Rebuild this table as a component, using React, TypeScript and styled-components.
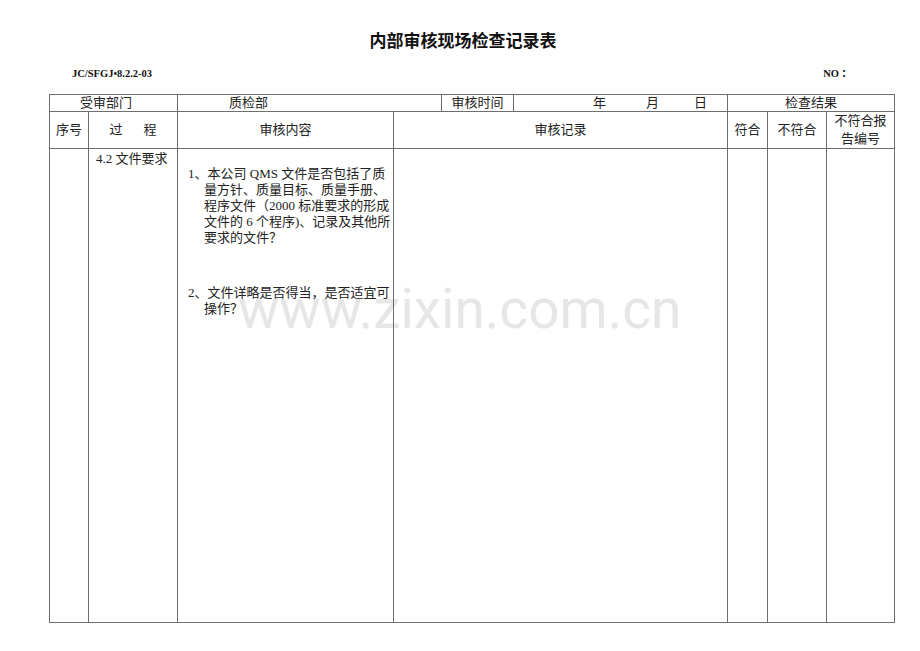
import React from "react";
import styled, { createGlobalStyle } from "styled-components";

const GlobalStyle = createGlobalStyle`
  html, body { margin: 0; padding: 0; background: #ffffff; }
  body { font-family: "Liberation Serif", "Noto Sans CJK SC", serif; color: #222; }
`;

const Page = styled.div`
  position: relative;
  width: 920px;
  height: 651px;
  overflow: hidden;
  background: #fff;
  display: flex;
  flex-direction: column;
`;

const Watermark = styled.div`
  position: absolute;
  left: 238px;
  top: 282px;
  font-family: Roboto, "Liberation Sans", sans-serif;
  font-weight: 400;
  font-size: 55px;
  line-height: 55px;
  color: #e6e6e6;
  white-space: nowrap;
  pointer-events: none;
  z-index: 0;
`;

const Title = styled.h1`
  margin: 30px 0 0 6px;
  text-align: center;
  font-family: "Noto Sans CJK SC", "Liberation Sans", sans-serif;
  font-size: 17px;
  line-height: 20px;
  font-weight: 700;
  color: #111;
  position: relative;
  z-index: 1;
`;

const CodeRow = styled.div`
  display: flex;
  justify-content: space-between;
  margin-top: 17px;
  padding: 0 68px 0 72px;
  font-family: "Liberation Serif", "Noto Sans CJK SC", serif;
  font-weight: 700;
  font-size: 10.5px;
  line-height: 14px;
  color: #111;
  position: relative;
  z-index: 1;
`;

const Sheet = styled.table`
  position: relative;
  z-index: 1;
  margin: 13px 0 0 49px;
  width: 845px;
  table-layout: fixed;
  border-collapse: collapse;
  font-family: "Liberation Serif", "Noto Sans CJK SC", serif;
  font-size: 13px;
  color: #222;
  background: transparent;
`;

const HeadRow = styled.tr<{ $h: number }>`
  height: ${(p) => p.$h}px;
`;

const Cell = styled.td<{ $align?: string; $pl?: number }>`
  border: 1px solid #6e6e6e;
  padding: 0 0 0 ${(p) => p.$pl ?? 0}px;
  text-align: ${(p) => p.$align ?? "center"};
  vertical-align: middle;
  line-height: 16px;
  white-space: nowrap;
`;

const TallCell = styled.td`
  border: 1px solid #6e6e6e;
  padding: 0;
  vertical-align: top;
  line-height: 16px;
`;

const Wrap2 = styled.div`
  line-height: 18px;
`;

const DateText = styled.span`
  display: inline-flex;
  gap: 0;
`;

const DatePart = styled.span<{ $w: number }>`
  display: inline-block;
  width: ${(p) => p.$w}px;
  text-align: left;
`;

const Spread = styled.span`
  display: inline-flex;
  gap: 21px;
`;

const ProcessText = styled.div`
  padding: 2px 0 0 7px;
  white-space: nowrap;
`;

const Items = styled.div`
  padding: 17px 0 0 10px;
  display: flex;
  flex-direction: column;
  gap: 39px;
`;

const Item = styled.div`
  display: flex;
  flex-direction: column;
`;

const Line = styled.div<{ $cont?: boolean }>`
  white-space: nowrap;
  padding-left: ${(p) => (p.$cont ? 16 : 0)}px;
  height: 16px;
`;

const cols = [39, 89, 216, 48, 72, 214, 40, 59, 68];

export default function App() {
  return (
    <Page>
      <GlobalStyle />
      <Watermark>www.zixin.com.cn</Watermark>
      <Title>内部审核现场检查记录表</Title>
      <CodeRow>
        <span>JC/SFGJ•8.2.2-03</span>
        <span>NO ：</span>
      </CodeRow>
      <Sheet>
        <colgroup>
          {cols.map((w, i) => (
            <col key={i} style={{ width: w }} />
          ))}
        </colgroup>
        <tbody>
          <HeadRow $h={17}>
            <Cell colSpan={2} $align="left" $pl={30}>受审部门</Cell>
            <Cell colSpan={2} $align="left" $pl={51}>质检部</Cell>
            <Cell>审核时间</Cell>
            <Cell $align="left" $pl={79}>
              <DateText>
                <DatePart $w={53}>年</DatePart>
                <DatePart $w={48}>月</DatePart>
                <DatePart $w={13}>日</DatePart>
              </DateText>
            </Cell>
            <Cell colSpan={3}>检查结果</Cell>
          </HeadRow>
          <HeadRow $h={36}>
            <Cell>序号</Cell>
            <Cell>
              <Spread>
                <span>过</span>
                <span>程</span>
              </Spread>
            </Cell>
            <Cell>审核内容</Cell>
            <Cell colSpan={3}>审核记录</Cell>
            <Cell>符合</Cell>
            <Cell>不符合</Cell>
            <Cell>
              <Wrap2>
                不符合报
                <br />
                告编号
              </Wrap2>
            </Cell>
          </HeadRow>
          <HeadRow $h={474}>
            <TallCell />
            <TallCell>
              <ProcessText>4.2 文件要求</ProcessText>
            </TallCell>
            <TallCell>
              <Items>
                <Item>
                  <Line>1、本公司 QMS 文件是否包括了质</Line>
                  <Line $cont>量方针、质量目标、质量手册、</Line>
                  <Line $cont>程序文件（2000 标准要求的形成</Line>
                  <Line $cont>文件的 6 个程序)、记录及其他所</Line>
                  <Line $cont>要求的文件？</Line>
                </Item>
                <Item>
                  <Line>2、文件详略是否得当，是否适宜可</Line>
                  <Line $cont>操作？</Line>
                </Item>
              </Items>
            </TallCell>
            <TallCell colSpan={3} />
            <TallCell />
            <TallCell />
            <TallCell />
          </HeadRow>
        </tbody>
      </Sheet>
    </Page>
  );
}
